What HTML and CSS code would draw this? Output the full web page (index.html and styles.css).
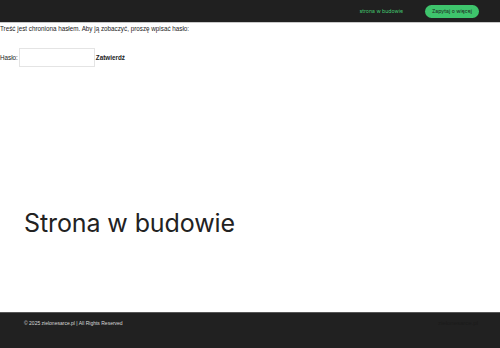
FILE: index.html
```html
<!DOCTYPE html>
<html lang="pl">
<head>
    <meta charset="UTF-8">
    <meta name="viewport" content="width=device-width"/>
    <title>Strona w budowie</title>
    <link rel="stylesheet" href="styles.css">
</head>
<body>
<div class="page">
    <header class="top">
        <nav class="menu">
            <a class="menu-link" href="#">strona w budowie</a>
            <a class="menu-btn" href="#">Zapytaj o więcej</a>
        </nav>
    </header>
    <main class="content">
        <form class="pass">
            <p class="pass-info">Treść jest chroniona hasłem. Aby ją zobaczyć, proszę wpisać hasło:</p>
            <p class="pass-row">
                <label class="pass-label">Hasło: <input class="pass-input" type="password"></label>
                <button class="pass-submit" type="button">Zatwierdź</button>
            </p>
        </form>
        <h1 class="title">Strona w budowie</h1>
    </main>
    <footer class="bottom">
        <p class="copy">© 2025 zielonesarce.pl | All Rights Reserved</p>
        <p class="copy-dim">zielonesarce.pl</p>
    </footer>
</div>
</body>
</html>
```

FILE: styles.css
```css
body{ margin: 0; background: #fff; color: #222;}
p{ margin: 0;}
a{ text-decoration: none;}
input, button{ -webkit-appearance: none; border-radius: 0; font-family: inherit;}

.page{ min-height: 100vh; display: flex; flex-direction: column;}

.top{ height: 22px; background: #202020; border-bottom: 1px solid #c9c9c9; display: flex; justify-content: flex-end; align-items: center; padding-right: 21px;}
.menu{ display: flex; align-items: center; gap: 22px; font-family: Inter, "Liberation Sans", sans-serif; font-size: 5.2px;}
.menu-link{ color: #43c86f;}
.menu-btn{ background: #3ec46c; color: #1d1d1d; padding: 0 7px; height: 13px; line-height: 13px; border-radius: 7px;}

.content{ flex: 1; display: flex; flex-direction: column;}
.pass{ font-family: "Liberation Sans", Arial, sans-serif; font-size: 6.3px; color: #222;}
.pass-info{ padding-top: 2px; line-height: 8px;}
.pass-row{ display: flex; align-items: center; margin-top: 15px;}
.pass-label{ display: flex; align-items: center; gap: 1px;}
.pass-input{ width: 76px; height: 19px; box-sizing: border-box; border: 1px solid #e4e4e4; background: #fff; margin: 0;}
.pass-submit{ border: 0; background: none; padding: 0 0 0 1px; font-size: 6.3px; font-weight: bold; color: #222;}

.title{ margin: 141px 0 0 24px; font-family: Inter, "Liberation Sans", sans-serif; font-weight: 400; font-size: 25px; letter-spacing: -0.1px; color: #222;}

.bottom{ height: 36px; background: #212121; border-top: 1px solid #575757; display: flex; justify-content: space-between; padding: 7px 22px 0 24px; box-sizing: border-box;}
.copy{ font-family: "Liberation Sans", Arial, sans-serif; font-size: 5px; color: #d8d8d8;}
.copy-dim{ font-family: "Liberation Sans", Arial, sans-serif; font-size: 6px; color: #1a1a1a; margin-top: 0;}
```
